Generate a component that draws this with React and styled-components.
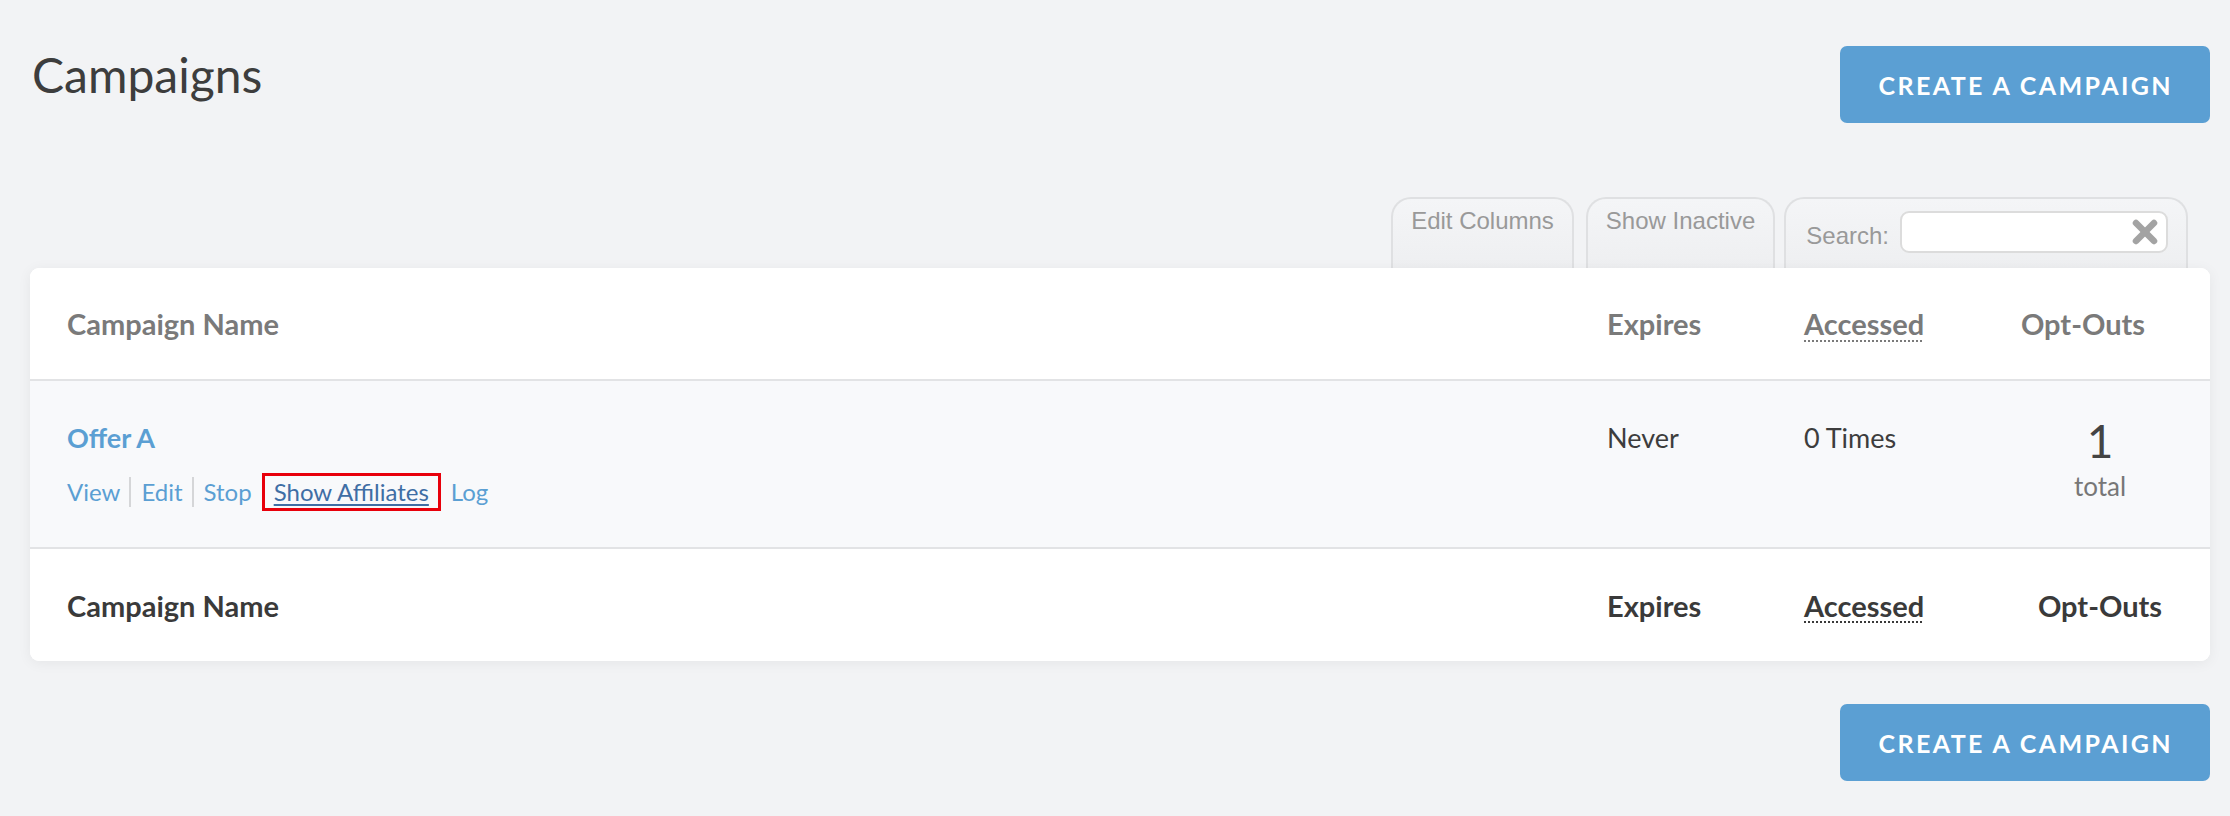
import React from "react";
import styled, { createGlobalStyle } from "styled-components";

const GlobalStyle = createGlobalStyle`
  html, body {
    margin: 0;
    padding: 0;
    background: #f2f3f5;
  }
  body {
    font-family: Lato, "Open Sans", sans-serif;
    color: #333;
  }
  * {
    box-sizing: border-box;
  }
`;

const Page = styled.div`
  width: 2230px;
  min-height: 816px;
  padding: 46px 20px 35px 30px;
  display: flex;
  flex-direction: column;
`;

const TopBar = styled.div`
  display: flex;
  justify-content: space-between;
  align-items: flex-start;
`;

const Title = styled.h1`
  margin: 0 0 0 2px;
  font-size: 48px;
  line-height: 1.2;
  font-weight: 400;
  color: #3d3d3d;
`;

const Button = styled.button`
  height: 77px;
  padding: 0 37px 0 38px;
  border: none;
  border-radius: 7px;
  background: #5b9fd3;
  color: #fff;
  font-family: Lato, sans-serif;
  font-size: 25px;
  font-weight: 700;
  letter-spacing: 2.4px;
  text-transform: uppercase;
  cursor: pointer;
`;

const BottomBar = styled.div`
  display: flex;
  justify-content: flex-end;
  margin-top: 43px;
`;

const Toolbar = styled.div`
  display: flex;
  justify-content: flex-end;
  align-items: flex-start;
  margin-top: 74px;
  padding-right: 22px;
`;

const Tab = styled.div`
  height: 71px;
  margin-left: ${(p) => p.gap || 0}px;
  padding: ${(p) => p.top || 8}px 18px 0;
  border: 2px solid #dfe0e2;
  border-bottom: none;
  border-radius: 20px 20px 0 0;
  background: linear-gradient(180deg, #f4f5f7 0%, #eeeff1 100%);
  font-family: "Liberation Sans", Arial, sans-serif;
  font-size: 24px;
  color: #999;
  display: flex;
  align-items: flex-start;
  gap: 11px;
`;

const SearchLabel = styled.span`
  line-height: 42px;
  padding-left: 2px;
  padding-top: 4px;
`;

const SearchBox = styled.div`
  width: 268px;
  height: 42px;
  border: 2px solid #dcdcdc;
  border-radius: 9px;
  background: #fff;
  display: flex;
  align-items: center;
  justify-content: flex-end;
  padding-right: 6px;
`;

const Card = styled.div`
  background: #fff;
  border-radius: 9px;
  box-shadow: 0 2px 14px rgba(0, 0, 0, 0.06);
  overflow: hidden;
  position: relative;
`;

const Row = styled.div`
  display: grid;
  grid-template-columns: 1fr 197px 197px 198px;
  padding: 0 11px 0 37px;
  height: ${(p) => p.h}px;
  align-items: ${(p) => (p.top ? "start" : "center")};
  background: ${(p) => (p.shaded ? "#f8f9fb" : "#fff")};
  border-bottom: ${(p) => (p.last ? "none" : "2px solid #e2e3e5")};
`;

const HeadCell = styled.div`
  font-size: 29px;
  font-weight: 700;
  color: ${(p) => (p.dark ? "#3a3a3a" : "#7a7a7a")};
  text-align: ${(p) => (p.center ? "center" : "left")};
  padding-right: ${(p) => p.pr || 0}px;
`;

const Abbr = styled.span`
  text-decoration: underline dotted;
  text-decoration-thickness: 2px;
  text-underline-offset: 5px;
`;

const NameCell = styled.div`
  padding-top: 41px;
`;

const CampaignLink = styled.a`
  display: block;
  font-size: 27px;
  line-height: 1.2;
  font-weight: 700;
  color: #5b9fd3;
  text-decoration: none;
`;

const Actions = styled.div`
  display: flex;
  align-items: center;
  margin-top: 19px;
`;

const Action = styled.a`
  font-size: 24px;
  line-height: 1.25;
  color: #5b9fd3;
  text-decoration: none;
  padding: 0 9px 0 10px;
  border-left: ${(p) => (p.sep ? "2px solid #d5d6d8" : "none")};
  &:first-child {
    padding-left: 0;
  }
`;

const Highlight = styled.span`
  border: 3px solid #e8000b;
  padding: 1px 9px;
  margin-left: 1px;
`;

const AffLink = styled.a`
  font-size: 24px;
  line-height: 1.25;
  color: #3f6ea5;
  text-decoration: underline;
  text-underline-offset: 3px;
`;

const DataCell = styled.div`
  padding-top: 41px;
  font-size: 27px;
  line-height: 1.2;
  color: #3d3d3d;
`;

const OptCell = styled.div`
  padding-top: 35px;
  display: flex;
  flex-direction: column;
  align-items: center;
`;

const Count = styled.div`
  font-size: 46px;
  font-weight: 400;
  line-height: 1.1;
  color: #444;
`;

const CountLabel = styled.div`
  margin-top: 4px;
  font-size: 26px;
  line-height: 1.2;
  color: #777;
`;

const ClearIcon = () => (
  <svg width="30" height="28" viewBox="0 0 30 28">
    <g stroke="#a3a3a3" strokeWidth="6.5" strokeLinecap="round">
      <line x1="6" y1="5" x2="24" y2="23" />
      <line x1="24" y1="5" x2="6" y2="23" />
    </g>
  </svg>
);

const HeaderRow = ({ dark, last }) => (
  <Row h={dark ? 112 : 113} last={last}>
    <HeadCell dark={dark}>Campaign Name</HeadCell>
    <HeadCell dark={dark}>Expires</HeadCell>
    <HeadCell dark={dark}>
      <Abbr>Accessed</Abbr>
    </HeadCell>
    <HeadCell dark={dark} center pr={dark ? 0 : 34}>
      Opt-Outs
    </HeadCell>
  </Row>
);

export default function App() {
  return (
    <>
      <GlobalStyle />
      <Page>
        <TopBar>
          <Title>Campaigns</Title>
          <Button>Create a Campaign</Button>
        </TopBar>

        <Toolbar>
          <Tab>Edit Columns</Tab>
          <Tab gap={12}>Show Inactive</Tab>
          <Tab gap={9} top={12}>
            <SearchLabel>Search:</SearchLabel>
            <SearchBox>
              <ClearIcon />
            </SearchBox>
          </Tab>
        </Toolbar>

        <Card>
          <HeaderRow />
          <Row h={168} shaded top>
            <NameCell>
              <CampaignLink>Offer A</CampaignLink>
              <Actions>
                <Action>View</Action>
                <Action sep>Edit</Action>
                <Action sep>Stop</Action>
                <Highlight>
                  <AffLink>Show Affiliates</AffLink>
                </Highlight>
                <Action>Log</Action>
              </Actions>
            </NameCell>
            <DataCell>Never</DataCell>
            <DataCell>0 Times</DataCell>
            <OptCell>
              <Count>1</Count>
              <CountLabel>total</CountLabel>
            </OptCell>
          </Row>
          <HeaderRow dark last />
        </Card>

        <BottomBar>
          <Button>Create a Campaign</Button>
        </BottomBar>
      </Page>
    </>
  );
}
